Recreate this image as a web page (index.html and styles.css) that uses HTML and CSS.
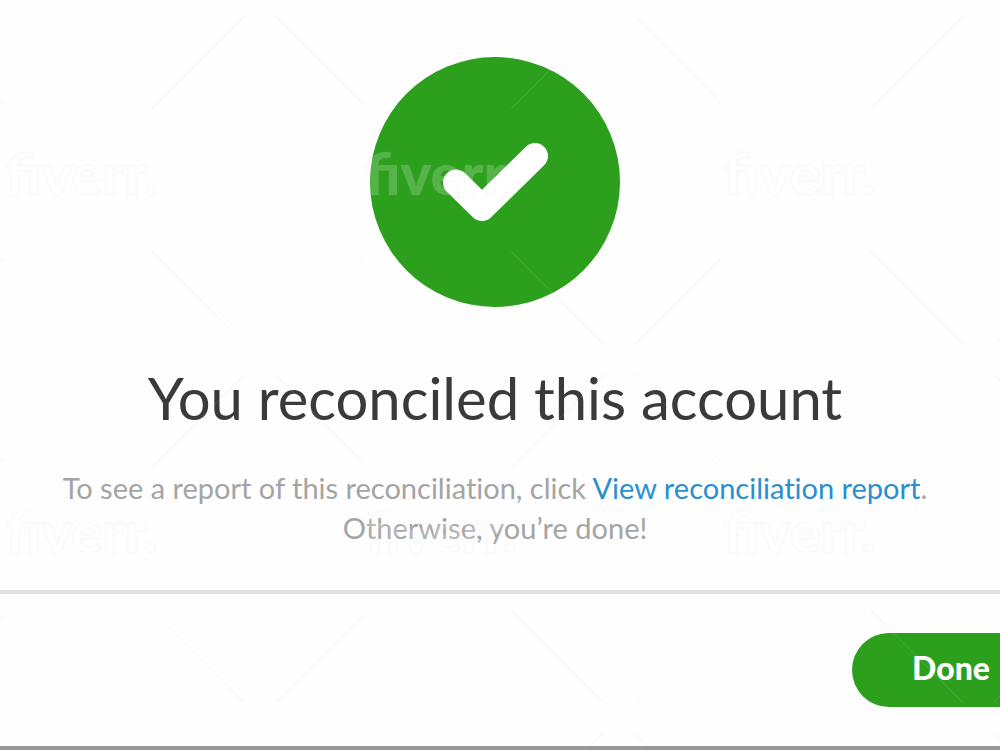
FILE: index.html
```html
<!DOCTYPE html>
<html lang="en">
<head>
<meta charset="utf-8">
<meta name="viewport" content="width=device-width, initial-scale=1">
<title>You reconciled this account</title>
<link rel="stylesheet" href="styles.css">
</head>
<body>
<div class="dialog">
  <main class="content">
    <svg class="success" viewBox="0 0 250 250" role="img" aria-label="Success">
      <circle cx="125" cy="125" r="125" fill="#2ca01c"/>
      <path d="M86 125.500 L112 151 L165 99" fill="none" stroke="#fff" stroke-width="26" stroke-linecap="round" stroke-linejoin="round"/>
    </svg>
    <h1 class="title">You reconciled this account</h1>
    <p class="message">To see a report of this reconciliation, click <a class="link" href="#report">View reconciliation report</a>.<br>Otherwise, you’re done!</p>
  </main>
  <footer class="footer">
    <button class="done" type="button">Done</button>
  </footer>
  <svg class="watermark" aria-hidden="true">
    <defs>
      <pattern id="mark" width="359" height="358" patternUnits="userSpaceOnUse">
        <path class="mark-line" d="M152 109L245 16M275 16L362 103M152 251L245 345M275 345L362 258M-1 100L3 104M-1 262L3 258"/>
        <text class="mark-text" x="6" y="195">fiverr.</text>
      </pattern>
    </defs>
    <rect width="100%" height="100%" fill="url(#mark)"/>
  </svg>
</div>
</body>
</html>
```
FILE: styles.css
```css
* {
  box-sizing: border-box;
}

body {
  margin: 0;
  background: #fefefe;
  color: #393a3d;
  font-family: Lato, "Open Sans", sans-serif;
  font-variant-ligatures: none;
}

.dialog {
  position: relative;
  display: flex;
  flex-direction: column;
  min-height: 100vh;
  overflow: hidden;
  border-bottom: 4px solid #999;
}

.content {
  flex: 1;
  display: flex;
  flex-direction: column;
  align-items: center;
  padding: 57px 10px 40px 0;
  text-align: center;
}

.success {
  width: 250px;
  height: 250px;
}

.title {
  margin: 57px 0 0;
  color: #3a3a3c;
  font-size: 58px;
  font-weight: 400;
  line-height: 68px;
}

.message {
  margin: 36px 0 0;
  color: #a4a4a4;
  font-size: 29px;
  line-height: 40px;
}

.link {
  color: #2a8fd0;
  text-decoration: none;
}

.footer {
  display: flex;
  justify-content: flex-end;
  padding: 39px 0;
  border-top: 4px solid #e2e2e2;
}

.done {
  flex: none;
  width: 200px;
  height: 74px;
  margin-right: -52px;
  padding: 0 2px 4px 0;
  border: 0;
  border-radius: 37px;
  background: #2ca01c;
  color: #fff;
  font: 900 32px/40px Lato, sans-serif;
}

.watermark {
  position: absolute;
  inset: 0;
  width: 100%;
  height: 100%;
  pointer-events: none;
}

.mark-line {
  fill: none;
  stroke: #c8c8c8;
  stroke-opacity: 0.18;
  stroke-width: 1;
}

.mark-text {
  fill: #fff;
  fill-opacity: 0.2;
  stroke: #999;
  stroke-opacity: 0.03;
  stroke-width: 3;
  font: 900 58px Lato, sans-serif;
}
```
